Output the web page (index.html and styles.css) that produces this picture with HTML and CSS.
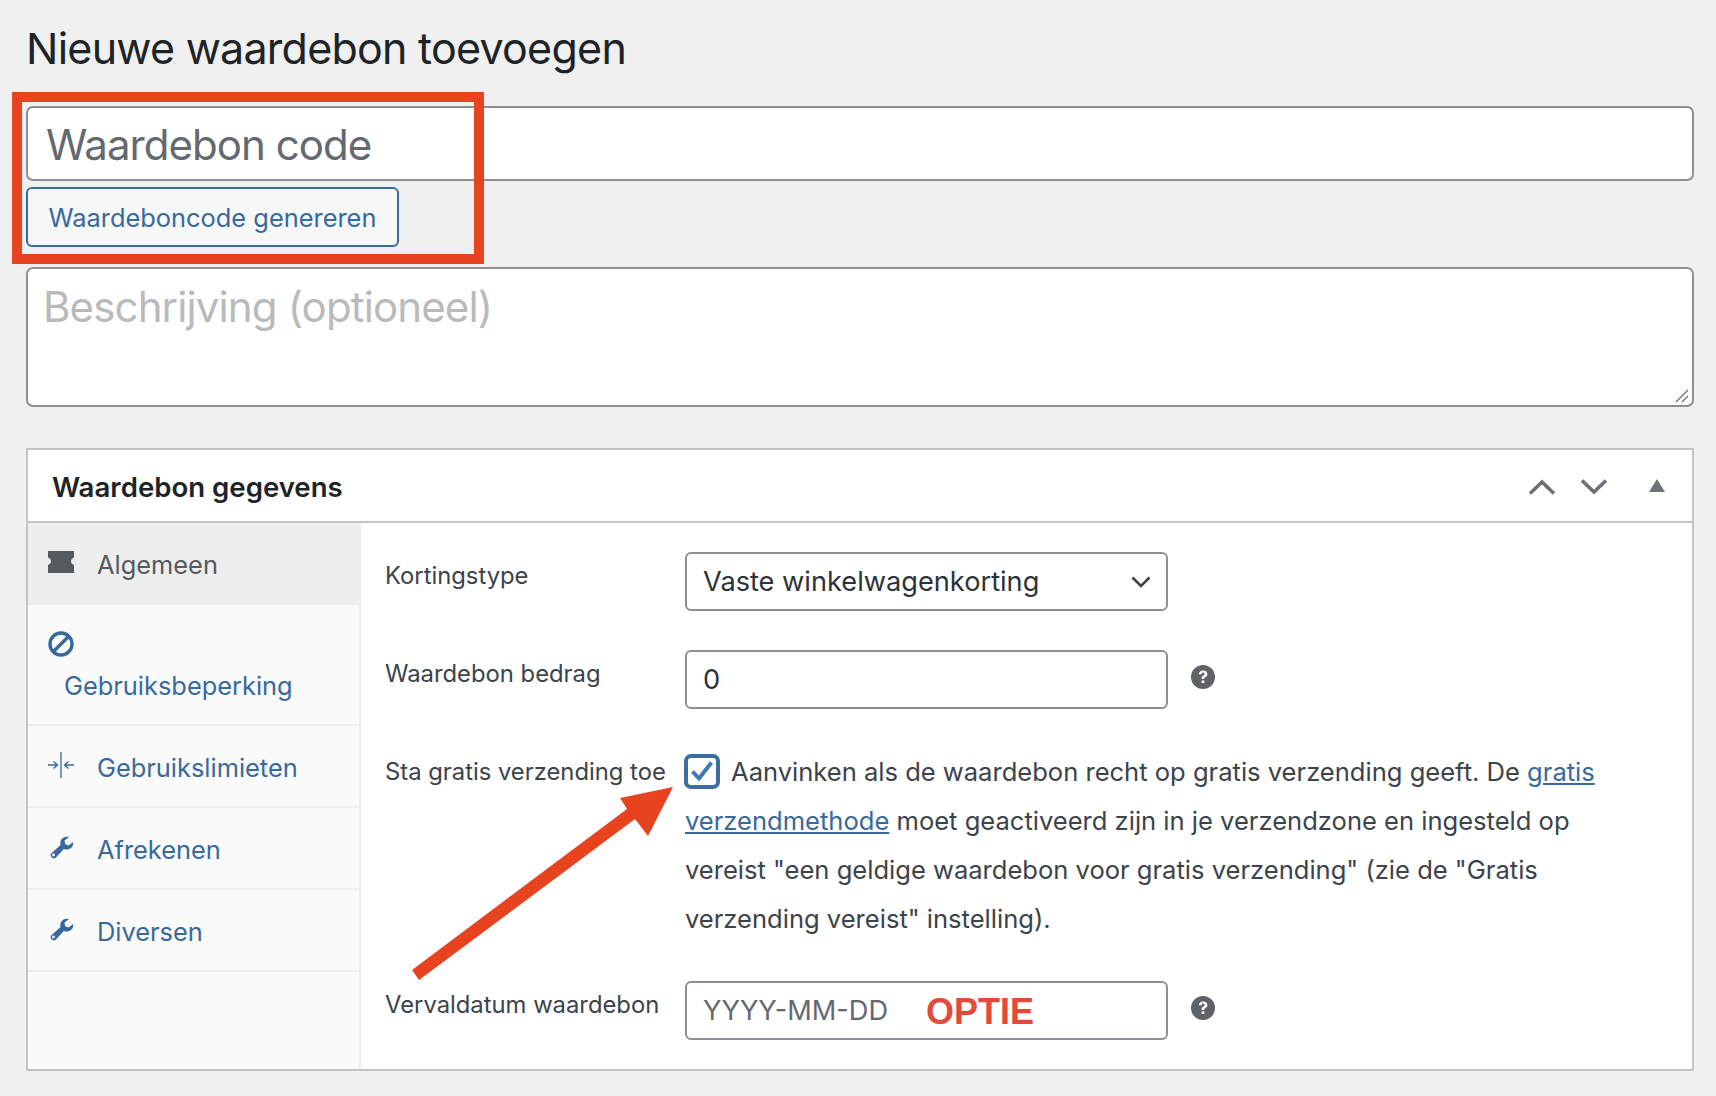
FILE: index.html
```html
<!DOCTYPE html>
<html lang="nl">
<head>
<meta charset="utf-8">
<title>Nieuwe waardebon toevoegen</title>
<link rel="stylesheet" href="styles.css">
</head>
<body>
<main class="page">
  <h1 class="title">Nieuwe waardebon toevoegen</h1>
  <div class="code-input">Waardebon code</div>
  <div class="gen-btn">Waardeboncode genereren</div>
  <div class="desc">Beschrijving (optioneel)
    <svg class="grip" viewBox="0 0 14 14"><path d="M1 13 13 1M7 13l6-6" fill="none" stroke="#6f7377" stroke-width="1.4"/></svg>
  </div>
  <section class="box">
    <header class="box-head">
      <h2 class="box-title">Waardebon gegevens</h2>
      <div class="box-actions">
        <svg class="chev" viewBox="0 0 28 16"><path d="M2 14.5 14 3l12 11.5" fill="none" stroke="#6d7276" stroke-width="3.6"/></svg>
        <svg class="chev" viewBox="0 0 28 16"><path d="M2 1.5 14 13 26 1.5" fill="none" stroke="#6d7276" stroke-width="3.6"/></svg>
        <svg class="tri" viewBox="0 0 16 13"><path d="M8 0 16 13H0z" fill="#6d7276"/></svg>
      </div>
    </header>
    <div class="box-body">
      <nav class="tabs">
        <div class="tab tab-active">
          <svg class="ico" viewBox="0 0 26 24"><path d="M0 1h26v6.500c-2 .8-3 2.200-3 3.800s1 3 3 3.800V23H0v-7.900c2-.8 3-2.200 3-3.800s-1-3-3-3.800z" fill="#555a5f"/></svg>
          <span>Algemeen</span>
        </div>
        <div class="tab tab-stack">
          <svg class="ico" viewBox="0 0 26 26"><circle cx="13" cy="13" r="11" fill="none" stroke="#38699c" stroke-width="3.400"/><path d="M6 20 20 6" stroke="#38699c" stroke-width="3.400"/></svg>
          <span class="stack-label">Gebruiksbeperking</span>
        </div>
        <div class="tab tab-plain">
          <svg class="ico" viewBox="0 0 26 26"><path d="M13 0v26M0 13h9M5.500 9.500 9.500 13l-4 3.500M26 13h-9M20.500 9.500 16.500 13l4 3.500" fill="none" stroke="#38699c" stroke-width="1.300"/></svg>
          <span>Gebruikslimieten</span>
        </div>
        <div class="tab tab-plain">
          <svg class="ico" viewBox="0 0 26 26"><use href="#wrench"/></svg>
          <span>Afrekenen</span>
        </div>
        <div class="tab tab-plain">
          <svg class="ico" viewBox="0 0 26 26"><use href="#wrench"/></svg>
          <span>Diversen</span>
        </div>
      </nav>
      <div class="panel">
        <div class="row">
          <div class="label">Kortingstype</div>
          <div class="field field-select">Vaste winkelwagenkorting
            <svg class="select-arrow" viewBox="0 0 20 12"><path d="M1.500 1.500 10 10l8.500-8.500" fill="none" stroke="#3c434a" stroke-width="2.600"/></svg>
          </div>
        </div>
        <div class="row">
          <div class="label">Waardebon bedrag</div>
          <div class="field">0</div>
          <svg class="help" viewBox="0 0 24 24"><use href="#help"/></svg>
        </div>
        <div class="row row-text">
          <div class="label label-text">Sta gratis verzending toe</div>
          <p class="check-text"><span class="check"><svg class="check-mark" viewBox="0 0 22 20"><path d="M1.500 10.500 8 17.500 20.500 1.500" fill="none" stroke="#4079bb" stroke-width="4"/></svg></span>Aanvinken als de waardebon recht op gratis verzending geeft. De <a class="link" href="#">gratis</a> <a class="link" href="#">verzendmethode</a> moet geactiveerd zijn in je verzendzone en ingesteld op vereist "een geldige waardebon voor gratis verzending" (zie de "Gratis verzending vereist" instelling).</p>
        </div>
        <div class="row">
          <div class="label">Vervaldatum waardebon</div>
          <div class="field field-date">YYYY-MM-DD</div>
          <svg class="help" viewBox="0 0 24 24"><use href="#help"/></svg>
        </div>
      </div>
    </div>
  </section>
</main>

<div class="mark-box"></div>
<div class="optie">OPTIE</div>
<svg class="arrow" viewBox="0 0 1716 1096"><path d="M673 787 648 836 635 819 419 980 412 970 627 809 620 798z" fill="#e8431f"/></svg>

<svg class="defs" width="0" height="0">
  <defs>
    <g id="wrench"><path d="M4 23.500c-1.500-1-2-2.800-.8-4L12.500 11c-.8-3 .2-5.500 2.500-7 1.700-1.200 4-1.500 6-.8l-4.500 3.300.7 3.700 3.300 1.300 4.800-3.500c.3 2.800-.8 5-3 6.500-2 1.300-4.300 1.400-6.500.5l-7.800 8.500c-1.300 1.300-3 1.200-4 0z" fill="#38699c" fill-rule="evenodd"/><circle cx="5.500" cy="21" r="1.400" fill="#fbfbfb"/></g>
    <g id="help"><circle cx="12" cy="12" r="12" fill="#5f6368"/><path d="M7.800 9.300c.2-2.600 2-3.900 4.400-3.900 2.500 0 4.200 1.400 4.200 3.500 0 1.600-.9 2.400-1.900 3.100-.9.600-1.300 1-1.300 2h-2.600c0-1.800.6-2.600 1.700-3.400.8-.6 1.300-1 1.300-1.700 0-.8-.6-1.300-1.400-1.300-.9 0-1.500.6-1.600 1.700zM10.600 15.400h2.700v2.700h-2.700z" fill="#fff"/></g>
  </defs>
</svg>
</body>
</html>
```

FILE: styles.css
```css
* { box-sizing: border-box; }
html, body { margin: 0; height: 100%; }
body {
  background: #f0f0f1;
  color: #3c434a;
  font-family: Inter, "Liberation Sans", sans-serif;
  overflow: hidden;
}
.page { padding: 23px 22px 0 26px; }
.title {
  margin: 0 0 33px;
  font-size: 43px;
  font-weight: 400;
  line-height: 50px;
  color: #1d2327;
  letter-spacing: -0.75px;
}
.code-input {
  height: 75px;
  padding: 1px 18px 0;
  display: flex;
  align-items: center;
  background: #fff;
  border: 2px solid #8c8f94;
  border-radius: 7px;
  font-size: 42px;
  letter-spacing: -0.95px;
  color: #646970;
}
.gen-btn {
  margin-top: 6px;
  width: 373px;
  height: 60px;
  display: flex;
  align-items: center;
  justify-content: center;
  background: #f6f7f7;
  border: 2px solid #3a6a99;
  border-radius: 6px;
  font-size: 25.400px;
  color: #38699c;
}
.desc {
  position: relative;
  margin-top: 20px;
  height: 140px;
  padding: 13px 15px;
  background: #fff;
  border: 2px solid #8c8f94;
  border-radius: 7px;
  font-size: 42px;
  line-height: 50px;
  letter-spacing: -0.87px;
  color: #b9babc;
}
.grip { position: absolute; right: 3px; bottom: 2px; width: 14px; height: 14px; }
.box {
  margin-top: 41px;
  height: 623px;
  display: flex;
  flex-direction: column;
  background: #fff;
  border: 2px solid #c3c4c7;
}
.box-head {
  flex: none;
  height: 73px;
  padding: 2px 27px 0 24px;
  display: flex;
  align-items: center;
  justify-content: space-between;
  border-bottom: 2px solid #c3c4c7;
}
.box-title { margin: 0; font-size: 27.600px; font-weight: 600; color: #1d2327; }
.box-actions { display: flex; align-items: center; gap: 24px; }
.chev { width: 28px; height: 16px; }
.tri { margin-left: 17px; width: 16px; height: 13px; margin-top: -3px; }
.box-body { flex: 1; display: flex; min-height: 0; }
.tabs { flex: none; width: 333px; background: #fafafa; border-right: 2px solid #eee; }
.tab {
  height: 82px;
  padding: 0 0 0 20px;
  display: flex;
  align-items: center;
  gap: 23px;
  border-bottom: 2px solid #eee;
  font-size: 25.400px;
  color: #38699c;
}
.tab-active { background: #eee; color: #555a5f; border-bottom: 0; }
.tab-plain { padding-top: 2px; }
.tab-stack { height: 121px; display: block; padding-top: 26px; }
.ico { flex: none; width: 26px; height: 26px; display: block; margin-top: -5px; }
.tab-stack .ico { margin: 0; }
.stack-label { display: block; margin: 13px 0 0 16px; }
.panel { flex: 1; padding: 29px 0 0 24px; display: flex; flex-direction: column; gap: 39px; }
.row { display: flex; align-items: flex-start; }
.row-text { margin-top: -1px; margin-bottom: -1px; }
.label { flex: none; width: 300px; font-size: 23.800px; line-height: 48px; color: #3c434a; }
.label-text { padding-top: 1px; }
.field {
  flex: none;
  width: 483px;
  height: 59px;
  padding: 0 16px;
  display: flex;
  align-items: center;
  justify-content: space-between;
  background: #fff;
  border: 2px solid #8c8f94;
  border-radius: 6px;
  font-size: 27.200px;
  color: #2c3338;
}
.field-date { color: #646970; }
.select-arrow { width: 20px; height: 12px; margin-right: -1px; }
.help { flex: none; width: 24px; height: 24px; margin: 15px 0 0 23px; }
.check-text { margin: 0; width: 961px; font-size: 25.550px; line-height: 49px; color: #3c434a; }
.check {
  display: inline-flex;
  align-items: center;
  justify-content: center;
  width: 36px;
  height: 35px;
  margin: 0 11px 0 -1px;
  vertical-align: 0;
  border: 4px solid #3b6ea5;
  border-radius: 7px;
  background: #fff;
}
.check-mark { width: 22px; height: 20px; }
.link { color: #38699c; }
.mark-box {
  position: absolute;
  left: 12px;
  top: 92px;
  width: 472px;
  height: 172px;
  border: 10px solid #e8431f;
}
.optie {
  position: absolute;
  left: 926px;
  top: 991px;
  font-family: "Liberation Sans", sans-serif;
  font-weight: 700;
  font-size: 36px;
  line-height: 42px;
  color: #e04b3c;
}
.arrow { position: absolute; left: 0; top: 0; width: 1716px; height: 1096px; pointer-events: none; }
.defs { position: absolute; }
```
